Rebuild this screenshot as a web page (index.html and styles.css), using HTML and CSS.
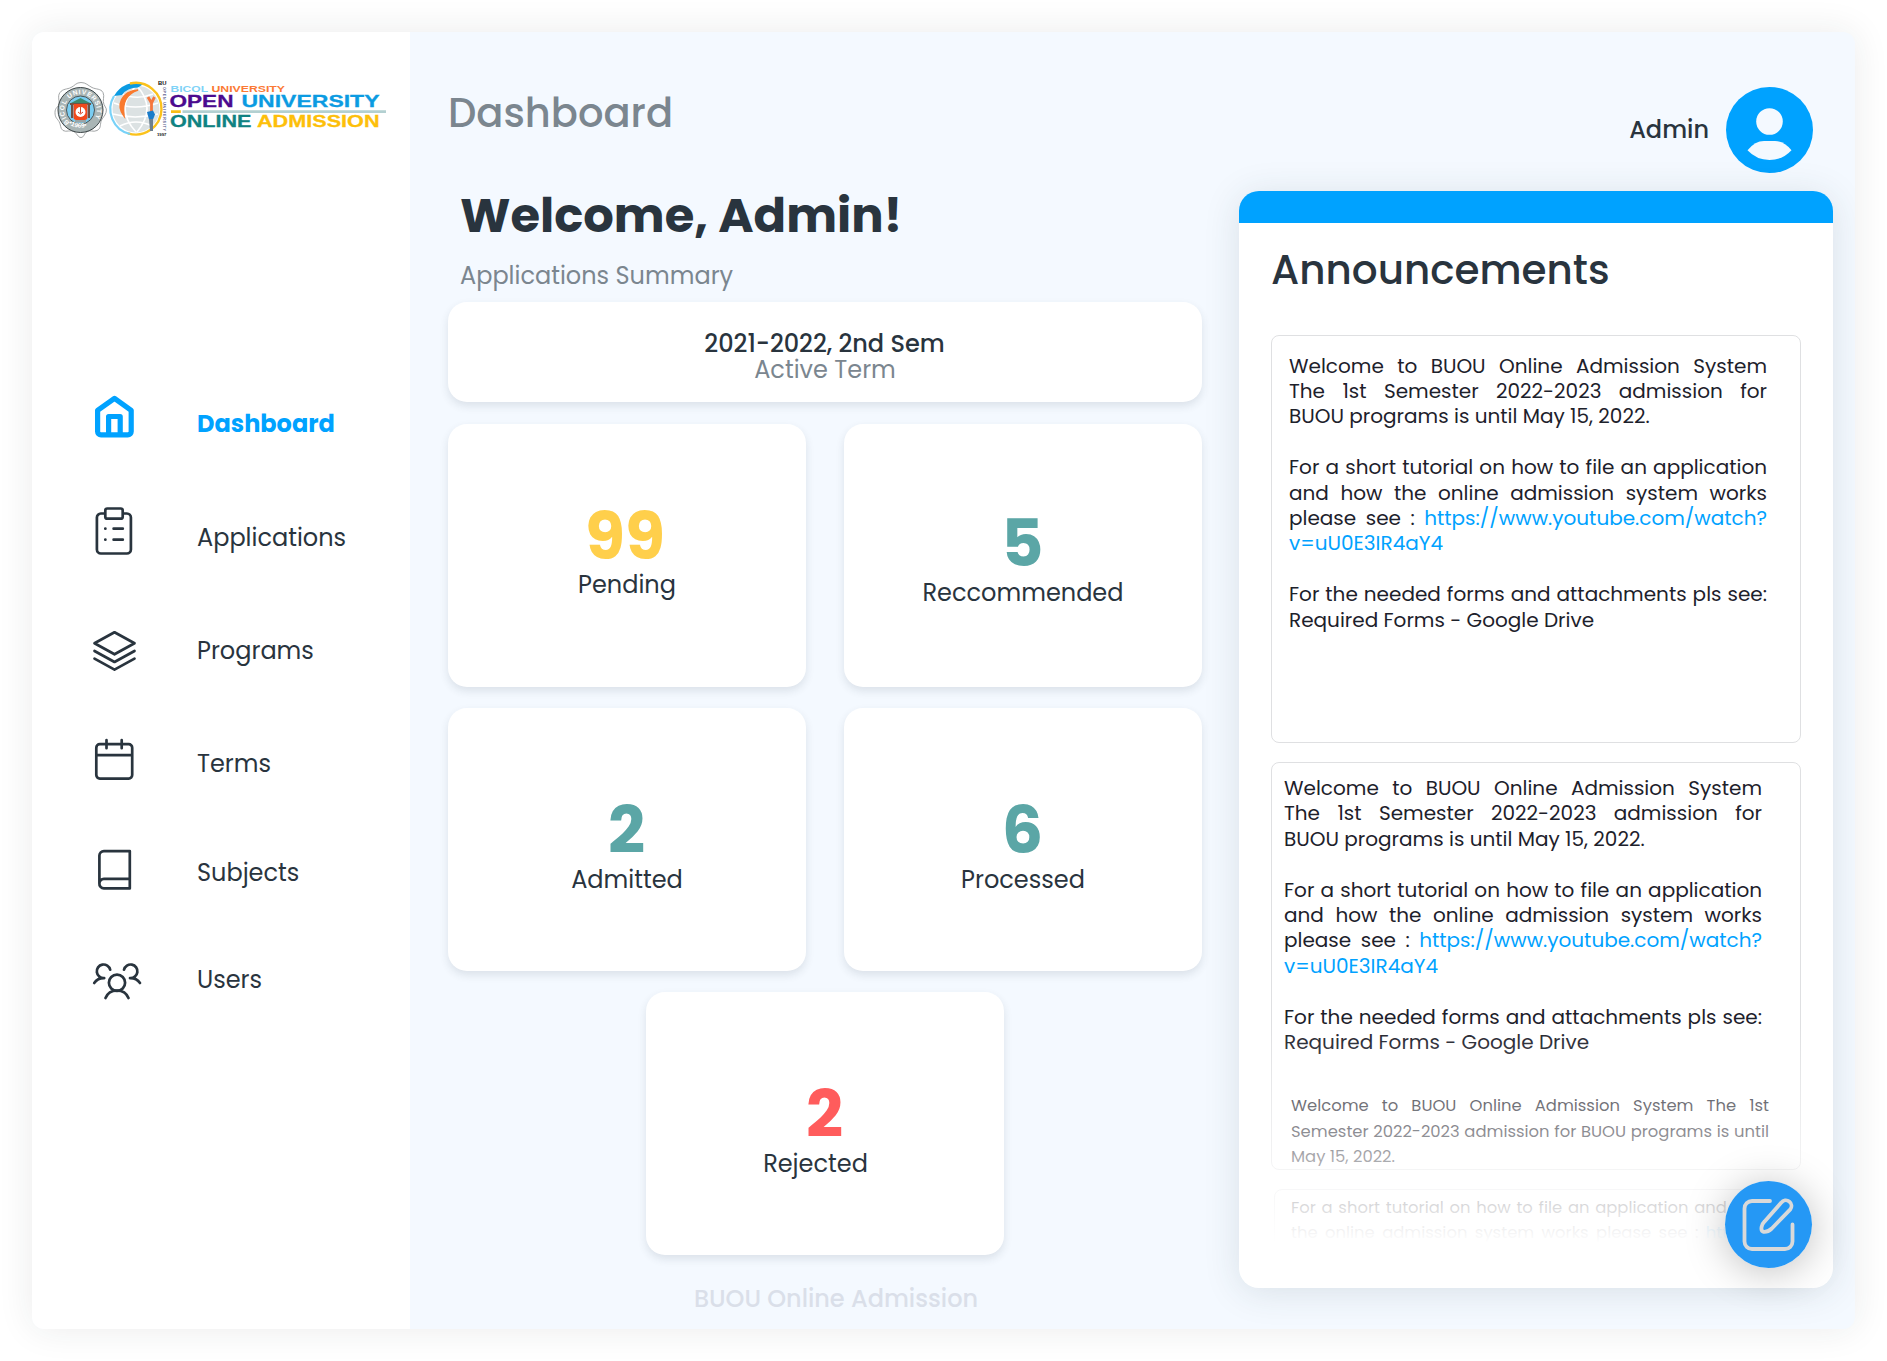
FILE: index.html
```html
<!DOCTYPE html>
<html lang="en">
<head>
<meta charset="utf-8">
<title>BUOU Online Admission</title>
<link rel="stylesheet" href="styles.css">
</head>
<body>
<div class="window">
  <aside class="sidebar">
    <svg class="logo" viewBox="50 78 340 64" width="340" height="64">
      <path d="M81 82.500c5 0 7 3 11 5s9 1 11 5-1 8 1 12 3 4 2 8-4 5-5 9 0 7-4 9-7-1-10 1-3 6-6 6-4-4-7-6-8 1-11-1-2-6-4-9-4-4-4-9 3-5 4-8-2-8 1-12 7-3 11-5 5-5 10-5z" fill="none" stroke="#8b8f90" stroke-width="0.800"/>
      <circle cx="80.500" cy="110" r="22.500" fill="#a9b5b5" stroke="#3c4547"/>
      <circle cx="80.500" cy="110" r="14" fill="#79cdf2" stroke="#4b5557"/>
      <path id="ring" d="M69.500 122.500a16.300 16.300 0 1 1 22 0" fill="none"/>
      <path id="ringlow" d="M65 120.500a20.300 20.300 0 0 0 31 0" fill="none"/>
      <text class="seal-text"><textPath href="#ring" textLength="72">BICOL UNIVERSITY</textPath></text>
      <text class="seal-text"><textPath href="#ringlow" startOffset="5">•1969•</textPath></text>
      <path d="M69 104l11.500-6 11.500 6z" fill="#3d8a70"/>
      <path d="M70 103h21v2H70zM71 105h2v13h-2zM88 105h2v13h-2z" fill="#6c5448"/>
      <path d="M73.500 104h14v13q0 3-3 3h-8q-3 0-3-3z" fill="#f04a1d"/>
      <circle cx="80.500" cy="112" r="5" fill="#fff"/>
      <path d="M80.500 106.500v7M78 112l2.500 2 2.500-2" stroke="#d8482c" fill="none"/>
      <path d="M75 120h11v2.500H75z" fill="#9aa4a5"/>

      <circle cx="136" cy="109" r="23.500" fill="#dce2e3"/>
      <path d="M120 93q16 8 33 1M114 103q21 8 44 0M113 114q22 6 45 0M120 126q16-8 32 0M136 86q-22 22 0 46M137 86q20 22 0 46" fill="none" stroke="#fff" stroke-width="1.600"/>
      <path d="M114 96a26 26 0 0 1 30-12.500l-6 4q-11 0-16 7.500z" fill="#0b9be2"/>
      <path d="M130 83.500a25.800 25.800 0 1 1-2 49.800" fill="none" stroke="#fbc21b" stroke-width="2.400"/>
      <path d="M114 96a25.500 25.500 0 0 0 16 38" fill="none" stroke="#78d2f8" stroke-width="2.200"/>
      <path d="M124 116c-8-10-3-25 14-26-12 4-16 14-14 26z" fill="#f97a2e" stroke="#f97a2e" stroke-width="1.600"/>
      <path d="M148 97l3.500 6 3-6M151.500 102v10" fill="none" stroke="#f5763c" stroke-width="2.800"/>
      <path d="M147 112l6-1.500 2 4-2 5h-4z" fill="#1b7cc9"/>
      <path d="M149 119h4v12h-3z" fill="#6d7f8e"/>
      <text class="brand-text" x="158" y="85.300" font-size="5.200" fill="#111" textLength="8.500" lengthAdjust="spacingAndGlyphs">BU</text>
      <text class="brand-text" transform="translate(163.300 87) rotate(90)" font-size="3.600" fill="#4b4f86" textLength="44">OPEN UNIVERSITY</text>
      <text class="brand-text" x="157" y="136" font-size="4.400" fill="#111" textLength="9.500" lengthAdjust="spacingAndGlyphs">1997</text>

      <g class="brand-text">
        <text x="170.500" y="92" font-size="8.800" fill="#7fd3f7" textLength="37.500" lengthAdjust="spacingAndGlyphs">BICOL</text>
        <text x="211.500" y="92" font-size="8.800" fill="#fb7a35" textLength="73.500" lengthAdjust="spacingAndGlyphs">UNIVERSITY</text>
        <text x="169.500" y="107.300" font-size="17.300" fill="#4b0a8f" stroke="#4b0a8f" textLength="64" lengthAdjust="spacingAndGlyphs">OPEN</text>
        <text x="241.500" y="107.300" font-size="17.300" fill="#0b9be2" stroke="#0b9be2" textLength="138" lengthAdjust="spacingAndGlyphs">UNIVERSITY</text>
        <text x="170" y="127" font-size="17.300" fill="#0f8282" stroke="#0f8282" textLength="81.500" lengthAdjust="spacingAndGlyphs">ONLINE</text>
        <text x="257" y="127" font-size="17.300" fill="#fdbf0a" stroke="#fdbf0a" textLength="122.500" lengthAdjust="spacingAndGlyphs">ADMISSION</text>
      </g>
      <path d="M171 110.200h9.800v2.800H171z" fill="#f8bd16"/>
      <path d="M182.500 110.200H386v2.800H182.500z" fill="#b3d0d1"/>
    </svg>

    <nav class="menu">
      <a class="item active">
        <svg class="icon" viewBox="0 0 60 60"><path d="M10.600 16.300L27.500 4.300l16.700 12v21.200a3.400 3.400 0 0 1-3.400 3.400H14a3.400 3.400 0 0 1-3.400-3.400zM21.600 40.500V22.500h11.600v18" stroke-width="5.200"/></svg>
        <span>Dashboard</span></a>
      <a class="item item-applications">
        <svg class="icon" viewBox="0 0 60 60"><path d="M17.500 5.500h-3.600a4 4 0 0 0-4 4v32a4 4 0 0 0 4 4h26a4 4 0 0 0 4-4v-32a4 4 0 0 0-4-4h-3.600M20.300.500h13.400a2 2 0 0 1 2 2v6.200a2 2 0 0 1-2 2H20.300a2 2 0 0 1-2-2V2.500a2 2 0 0 1 2-2zM18.300 20.700h.100M26.600 20.700h9.200M18.300 31.700h.100M26.600 31.700h9.200"/></svg>
        <span>Applications</span></a>
      <a class="item item-programs">
        <svg class="icon" viewBox="0 0 60 60"><path d="M27.500 11.300l20 11-20 11-20-11zM7.500 30l20 11 20-11M7.500 37.600l20 11 20-11"/></svg>
        <span>Programs</span></a>
      <a class="item item-terms">
        <svg class="icon" viewBox="0 0 60 60"><path d="M12.800 10.200h28.900a3.500 3.500 0 0 1 3.500 3.500v27.400a3.500 3.500 0 0 1-3.500 3.500H12.800a3.500 3.500 0 0 1-3.500-3.500V13.700a3.500 3.500 0 0 1 3.500-3.500zM9.300 21.200h35.900M19.500 6.200v8M34.700 6.200v8"/></svg>
        <span>Terms</span></a>
      <a class="item item-subjects">
        <svg class="icon" viewBox="0 0 60 60"><path d="M12.400 40.500V12.600a4.500 4.500 0 0 1 4.500-4.500h25.900v37.300H16.900a4.500 4.500 0 0 1-4.500-4.900 4.500 4.500 0 0 1 4.500-4.600h25.900"/></svg>
        <span>Subjects</span></a>
      <a class="item item-users">
        <svg class="icon" viewBox="0 0 60 60"><circle cx="30" cy="32.800" r="8.100"/><path d="M18.500 48q3-7.500 11.500-7.500T41.500 48M23.200 19.700a6.800 6.800 0 1 0-6 8.400q-6.500-.200-10 4.900M37 19.700a6.800 6.800 0 1 1 6 8.400q6.500-.200 10 4.900"/></svg>
        <span>Users</span></a>
    </nav>
  </aside>

  <main class="main">
    <section class="overview">
      <h2 class="page-title">Dashboard</h2>
      <h1 class="welcome">Welcome, Admin!</h1>
      <p class="summary">Applications Summary</p>
      <div class="card term"><b>2021-2022, 2nd Sem</b><span>Active Term</span></div>
      <div class="stats">
        <div class="card stat pending"><strong>99</strong><span>Pending</span></div>
        <div class="card stat recommended"><strong>5</strong><span>Reccommended</span></div>
        <div class="card stat"><strong>2</strong><span>Admitted</span></div>
        <div class="card stat"><strong>6</strong><span>Processed</span></div>
        <div class="card stat rejected"><strong>2</strong><span>Rejected</span></div>
      </div>
      <footer class="footer">BUOU Online Admission</footer>
    </section>

    <section class="side">
      <header class="account">
        <span>Admin</span>
        <svg class="avatar" viewBox="0 0 87 86"><ellipse cx="43.500" cy="43" rx="43.500" ry="43" fill="#00a2ff"/><circle cx="43.500" cy="34.500" r="13.300" fill="#f4f9ff"/><path d="M21.500 63.300Q29 54 38 54h11q9 0 16.500 9.300Q56.500 73 43.500 73T21.500 63.300z" fill="#f4f9ff"/></svg>
      </header>
      <div class="panel">
        <h2 class="panel-title">Announcements</h2>
        <div class="feed">
          <article class="note">
            <div class="full">Welcome to BUOU Online Admission System</div>
            <div class="full">The 1st Semester 2022-2023 admission for</div>
            <div>BUOU programs is until May 15, 2022.</div>
            <div class="full para">For a short tutorial on how to file an application</div>
            <div class="full">and how the online admission system works</div>
            <div class="full">please see : <a>https://www.youtube.com/watch?</a></div>
            <div><a>v=uU0E3IR4aY4</a></div>
            <div class="full para">For the needed forms and attachments pls see:</div>
            <div>Required Forms - Google Drive</div>
          </article>
          <article class="note second">
            <div class="full">Welcome to BUOU Online Admission System</div>
            <div class="full">The 1st Semester 2022-2023 admission for</div>
            <div>BUOU programs is until May 15, 2022.</div>
            <div class="full para">For a short tutorial on how to file an application</div>
            <div class="full">and how the online admission system works</div>
            <div class="full">please see : <a>https://www.youtube.com/watch?</a></div>
            <div><a>v=uU0E3IR4aY4</a></div>
            <div class="full para">For the needed forms and attachments pls see:</div>
            <div>Required Forms - Google Drive</div>
            <div class="small">
              <div class="full">Welcome to BUOU Online Admission System The 1st</div>
              <div class="full">Semester 2022-2023 admission for BUOU programs is until</div>
              <div>May 15, 2022.</div>
            </div>
          </article>
          <article class="note third">
            <div class="small">
              <div class="full">For a short tutorial on how to file an application and how</div>
              <div class="full">the online admission system works please see : <a>https://</a></div>
            </div>
          </article>
        </div>
        <button class="compose" aria-label="Compose">
          <svg viewBox="0 0 87 87"><path d="M45 20H27a7.500 7.500 0 0 0-7.500 7.500v33a7.500 7.500 0 0 0 7.500 7.500h33a7.500 7.500 0 0 0 7.500-7.500V43.500M56.300 21.600a5.600 5.600 0 0 1 9 6.800L46.800 47.500q-4 3.700-8.200 3.300-2.800-.6-2-5 .6-3 3-5.400z"/></svg>
        </button>
      </div>
    </section>
  </main>
</div>
</body>
</html>
```
FILE: styles.css
```css
* { box-sizing: border-box; }
body {
  margin: 0;
  padding: 32px;
  width: 1887px;
  height: 1361px;
  overflow: hidden;
  background: #fff;
  color: #29343e;
  font-family: Poppins, Inter, "Liberation Sans", sans-serif;
  font-size: 24px;
}
h1, h2, p { margin: 0; font-weight: 500; }
.window {
  display: flex;
  width: 1823px;
  height: 1297px;
  border-radius: 12px;
  overflow: hidden;
  background: #f4f9ff;
  box-shadow: 0 0 36px rgba(30, 45, 40, 0.09);
}

/* Sidebar */
.sidebar { width: 378px; padding-top: 46px; background: #fff; }
.logo { display: block; margin-left: 18px; }
.brand-text { font-family: "Liberation Sans", sans-serif; font-weight: 700; stroke-width: 0.300; }
.seal-text { font: 700 6.500px "Liberation Sans", sans-serif; fill: #fff; }
.menu { padding: 251.500px 0 0 55px; }
.item { display: flex; align-items: center; height: 60px; }
.item span { margin-left: 50px; }
.icon {
  width: 60px;
  height: 60px;
  overflow: visible;
  fill: none;
  stroke: currentColor;
  stroke-width: 2.700;
  stroke-linecap: round;
  stroke-linejoin: round;
}
.active { color: #00a2ff; font-weight: 700; }
.item-applications { margin-top: 54px; }
.item-programs { margin-top: 53px; }
.item-terms { margin-top: 53px; }
.item-subjects { margin-top: 49px; }
.item-users { margin-top: 47px; }

/* Overview column */
.main { display: flex; flex: 1; padding-left: 38px; gap: 37px; }
.overview { width: 754px; padding-top: 56px; }
.page-title { color: #7b868f; font-size: 40px; line-height: 50px; }
.welcome { padding-left: 12px; margin-top: 48px; font-size: 48px; font-weight: 700; line-height: 60px; }
.summary { padding-left: 12px; margin-top: 15px; color: #7b868f; line-height: 30px; font-weight: 400; }
.card { background: #fff; border-radius: 19px; box-shadow: 0 4px 8px rgba(40, 60, 70, 0.12); }
.term {
  display: flex;
  flex-direction: column;
  align-items: center;
  height: 100px;
  margin-top: 11px;
  padding-top: 29px;
  line-height: 26px;
}
.term b { margin-right: 1px; font-weight: 500; }
.term span { color: #7b868f; }
.stats { display: flex; flex-wrap: wrap; justify-content: center; gap: 21px 38px; margin-top: 22px; }
.stat {
  display: flex;
  flex-direction: column;
  align-items: center;
  width: 358px;
  height: 263px;
  padding-top: 91px;
  line-height: 34px;
}
.stat strong { margin-right: 1px; color: #5ba6a6; font-size: 65px; font-weight: 700; line-height: 64px; }
.pending { padding-top: 81px; }
.recommended { padding-top: 88px; }
.pending strong { margin: 0 4px -1px 0; color: #ffcf4b; }
.rejected strong { color: #ff5c5c; }
.rejected span { margin-right: 19px; }
.footer { padding-left: 22px; margin-top: 29px; text-align: center; color: #dadfe9; font-weight: 500; line-height: 30px; }

/* Announcements column */
.side { width: 594px; }
.account {
  display: flex;
  justify-content: flex-end;
  height: 159px;
  padding: 55px 20px 0 0;
  gap: 17px;
  font-weight: 500;
  line-height: 86px;
}
.avatar { width: 87px; height: 86px; }
.panel {
  position: relative;
  height: 1097px;
  padding: 0 32px;
  border-top: 32px solid #00a2ff;
  border-radius: 20px;
  background: #fff;
  box-shadow: 0 4px 36px rgba(40, 60, 70, 0.13);
}
.panel-title { padding: 22px 0 0; font-size: 40.500px; line-height: 50px; }
.feed { position: relative; height: 908px; margin-top: 40px; overflow: hidden; }
.feed::after {
  content: "";
  position: absolute;
  inset: 690px 0 0;
  background: linear-gradient(rgba(255, 255, 255, 0), #fff);
}
.note {
  height: 408px;
  padding: 17.500px 33px 0 17px;
  border: 1.500px solid #dfe0e2;
  border-radius: 8px;
  color: #1d212b;
  font-size: 20px;
  line-height: 25.400px;
  white-space: nowrap;
}
.full { text-align-last: justify; }
.para { margin-top: 25.400px; }
.note a { color: #00a2ff; }
.second { margin-top: 19px; padding: 13px 38px 0 12px; }
.third { margin: 19px 0 0 3px; padding: 5px 33px 0 16px; }
.small { font-size: 16.400px; }
.second .small { margin: 38px -7px 0 7px; }
.compose {
  position: absolute;
  right: 21px;
  bottom: 20px;
  width: 87px;
  height: 87px;
  padding: 0;
  border: 0;
  border-radius: 50%;
  background: #2196f5fa;
  box-shadow: 0 4px 40px rgba(0, 0, 0, 0.25);
}
.compose svg { display: block; fill: none; stroke: #d9d9d9; stroke-width: 3.800; stroke-linecap: round; stroke-linejoin: round; }
```
